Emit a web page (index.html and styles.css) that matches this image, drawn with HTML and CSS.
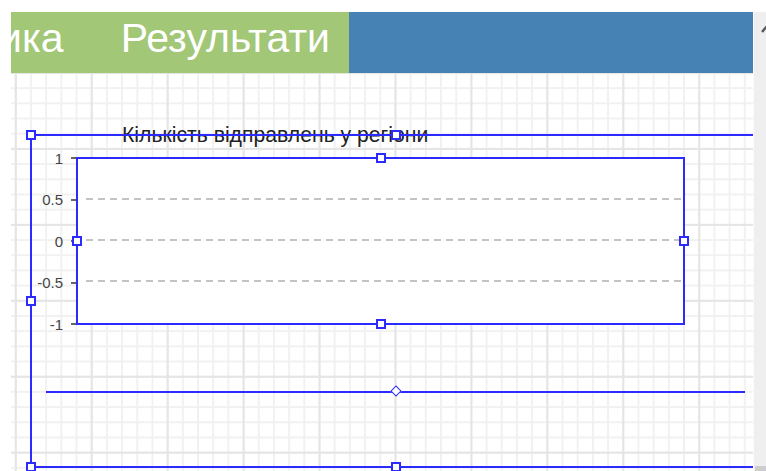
FILE: index.html
```html
<!DOCTYPE html>
<html lang="uk">
<head>
<meta charset="utf-8">
<title>Результати</title>
<link rel="stylesheet" href="styles.css">
</head>
<body>
<div class="page">
  <div class="main">
    <header class="header">
      <nav class="tabs">
        <div class="tab">Статистика</div>
        <div class="tab tab-active">Результати</div>
      </nav>
      <div class="header-fill"></div>
    </header>

    <section class="canvas">
      <div class="chart-title">Кількість відправлень у регіони</div>

      <div class="axis">
        <div class="axis-row"><span>1</span><i class="tick"></i></div>
        <div class="axis-row"><span>0.5</span><i class="tick"></i></div>
        <div class="axis-row"><span>0</span><i class="tick"></i></div>
        <div class="axis-row"><span>-0.5</span><i class="tick"></i></div>
        <div class="axis-row"><span>-1</span><i class="tick"></i></div>
      </div>

      <div class="plot">
        <div class="plot-band"></div>
        <div class="plot-band"></div>
        <div class="plot-band"></div>
        <div class="plot-band last"></div>
        <span class="handle h-top"></span>
        <span class="handle h-left"></span>
        <span class="handle h-right"></span>
        <span class="handle h-bottom"></span>
      </div>

      <div class="frame">
        <span class="handle f-tl"></span>
        <span class="handle f-tc"></span>
        <span class="handle f-ml"></span>
        <span class="handle f-bl"></span>
        <span class="handle f-bc"></span>
      </div>

      <div class="legend-line">
        <span class="diamond"></span>
      </div>
    </section>
  </div>

  <aside class="scrollbar">
    <svg class="scroll-up" width="20" height="20" viewBox="0 0 20 20">
      <polyline points="8,17 14,10 20,17" fill="none" stroke="#5a5a5a" stroke-width="2.5"/>
    </svg>
    <div class="scroll-corner"></div>
  </aside>
</div>
</body>
</html>
```

FILE: styles.css
```css
html, body {
  margin: 0;
  padding: 0;
  background: #ffffff;
  overflow: hidden;
}

body {
  font-family: "Liberation Sans", Arial, sans-serif;
}

.page {
  display: flex;
  height: 471px;
  padding: 12px 0 0 11px;
  box-sizing: border-box;
}

.main {
  width: 742px;
  display: flex;
  flex-direction: column;
}

/* ---------- header with tab strip ---------- */
.header {
  display: flex;
  height: 61px;
  flex: none;
}

.tabs {
  width: 338px;
  display: flex;
  justify-content: flex-end;
  overflow: hidden;
  background: #a1c777;
}

.tab {
  flex: none;
  white-space: nowrap;
  color: #ffffff;
  font-size: 41px;
  line-height: 52px;
  padding: 0 15px 9px 42px;
}

.tab-active {
  padding-right: 19px;
}

.header-fill {
  flex: 1;
  background: #4682b4;
}

/* ---------- designer canvas ---------- */
.canvas {
  position: relative;
  flex: 1;
  overflow: hidden;
  background-color: #ffffff;
  background-image:
    linear-gradient(to right, #e5e5e5 0 2px, transparent 2px),
    linear-gradient(to bottom, #e5e5e5 0 2px, transparent 2px),
    linear-gradient(to right, #f1f1f1 0 2px, transparent 2px),
    linear-gradient(to bottom, #f1f1f1 0 2px, transparent 2px);
  background-size: 75.94px 75.94px, 75.94px 75.94px, 15.19px 15.19px, 15.19px 15.19px;
  background-position: 3.8px -1px, 3.8px -1px, 3.8px -1px, 3.8px -1px;
}

.chart-title {
  position: absolute;
  left: 111px;
  top: 51px;
  font-size: 21.2px;
  line-height: 21px;
  color: #222222;
  white-space: nowrap;
}

/* y axis labels with ticks */
.axis {
  position: absolute;
  left: 0;
  top: 76px;
  width: 66px;
  height: 184px;
  display: flex;
  flex-direction: column;
  justify-content: space-between;
}

.axis-row {
  height: 18px;
  display: flex;
  align-items: center;
  justify-content: flex-end;
  gap: 8px;
  font-size: 15px;
  color: #444444;
}

.tick {
  width: 6px;
  height: 2px;
  background: #666666;
}

/* plot area */
.plot {
  position: absolute;
  left: 65px;
  top: 84px;
  width: 609px;
  height: 168px;
  box-sizing: border-box;
  border: 2px solid #2b2bff;
  background: #ffffff;
  display: flex;
  flex-direction: column;
}

.plot-band {
  flex: 1;
  background-image: repeating-linear-gradient(to right, #c4c4c4 0 7px, transparent 7px 12px);
  background-size: 100% 2px;
  background-repeat: no-repeat;
  background-position: 8px bottom;
}

.plot-band.last {
  background: none;
}

/* selection frame of the chart element */
.frame {
  position: absolute;
  left: 19px;
  top: 61px;
  width: 760px;
  height: 334px;
  box-sizing: border-box;
  border: 2px solid #2b2bff;
}

.handle {
  position: absolute;
  width: 10px;
  height: 10px;
  box-sizing: border-box;
  background: #ffffff;
  border: 2px solid #2b2bff;
}

.plot .h-top    { left: 298px; top: -6px; }
.plot .h-bottom { left: 298px; bottom: -6px; }
.plot .h-left   { left: -6px;  top: 77px; }
.plot .h-right  { right: -6px; top: 77px; }

.frame .f-tl { left: -6px;  top: -6px; }
.frame .f-tc { left: 359px; top: -6px; }
.frame .f-ml { left: -6px;  top: 160px; }
.frame .f-bl { left: -6px;  bottom: -6px; }
.frame .f-bc { left: 359px; bottom: -6px; }

/* legend line */
.legend-line {
  position: absolute;
  left: 35px;
  top: 318px;
  width: 699px;
  height: 2px;
  background: #2b2bff;
}

.diamond {
  position: absolute;
  left: 346px;
  top: -4px;
  width: 8px;
  height: 8px;
  box-sizing: border-box;
  background: #ffffff;
  border: 1.5px solid #2b2bff;
  transform: rotate(45deg);
}

/* right scrollbar */
.scrollbar {
  position: relative;
  width: 13px;
  flex: none;
  overflow: hidden;
  background: #efefef;
  border-left: 1px solid #fbfbfb;
  box-sizing: border-box;
}

.scroll-up {
  position: absolute;
  left: 0;
  top: 3px;
}

.scroll-corner {
  position: absolute;
  left: 1px;
  top: 454px;
  width: 14px;
  height: 8px;
  background: #cdcdcd;
}
```
